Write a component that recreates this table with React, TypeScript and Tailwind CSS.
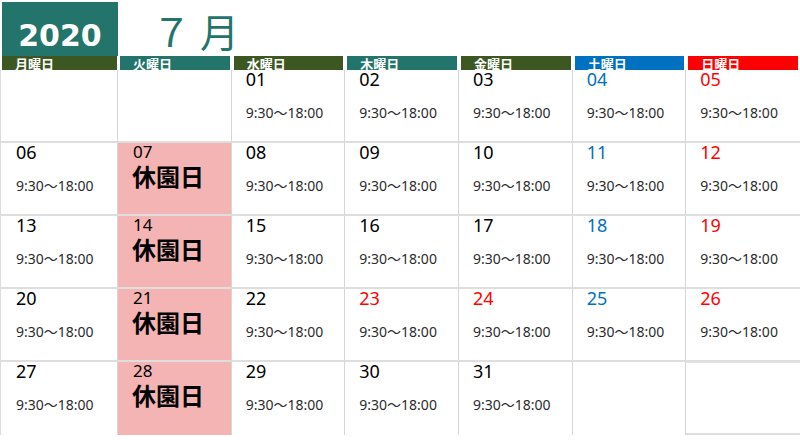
import React from "react";

type Cell = { d?: string; color?: string; closed?: boolean };

const BLUE = "text-[#0070c0]";
const RED = "text-[#ff0000]";

const rows: Cell[][] = [
  [{}, {}, { d: "01" }, { d: "02" }, { d: "03" }, { d: "04", color: BLUE }, { d: "05", color: RED }],
  [{ d: "06" }, { d: "07", closed: true }, { d: "08" }, { d: "09" }, { d: "10" }, { d: "11", color: BLUE }, { d: "12", color: RED }],
  [{ d: "13" }, { d: "14", closed: true }, { d: "15" }, { d: "16" }, { d: "17" }, { d: "18", color: BLUE }, { d: "19", color: RED }],
  [{ d: "20" }, { d: "21", closed: true }, { d: "22" }, { d: "23", color: RED }, { d: "24", color: RED }, { d: "25", color: BLUE }, { d: "26", color: RED }],
  [{ d: "27" }, { d: "28", closed: true }, { d: "29" }, { d: "30" }, { d: "31" }, {}, {}],
];

const headers = [
  { t: "月曜日", bg: "bg-[#3d5723]" },
  { t: "火曜日", bg: "bg-[#23746a]" },
  { t: "水曜日", bg: "bg-[#3d5723]" },
  { t: "木曜日", bg: "bg-[#23746a]" },
  { t: "金曜日", bg: "bg-[#3d5723]" },
  { t: "土曜日", bg: "bg-[#0070c0]" },
  { t: "日曜日", bg: "bg-[#ff0000]" },
];

const FONT = "font-['Noto_Sans','Noto_Sans_CJK_JP',sans-serif]";

export default function App() {
  return (
    <div className={`w-[800px] h-[440px] bg-white overflow-hidden ${FONT}`}>
      {/* title row */}
      <div className="grid grid-cols-[118px_repeat(6,minmax(0,1fr))] h-[56px]">
        <div className="pl-[2px] pt-[2px]">
          <div className="h-[54px] bg-[#23746a] flex items-end justify-center pb-[5px]">
            <span className="font-['DejaVu_Sans',sans-serif] font-bold text-[30px] leading-[30px] text-white">
              2020
            </span>
          </div>
        </div>
        <div className="col-span-6 flex items-end pl-[34px] pb-[3px] font-['Noto_Sans_CJK_JP',sans-serif] text-[39px] leading-[46px] text-[#23746a]">
          <span>７</span>
          <span className="ml-[9px]">月</span>
        </div>
      </div>
      {/* weekday headers */}
      <div className="grid grid-cols-[118px_repeat(6,minmax(0,1fr))] h-[14px]">
        {headers.map((h, i) => (
          <div key={i} className={i === 0 ? "pl-[2px] pr-[1px]" : "px-[2px]"}>
            <div className={`${h.bg} h-[14px] overflow-hidden pl-[13px]`}>
              <span className="font-['Noto_Sans_CJK_JP',sans-serif] font-bold text-[13px] leading-[15px] text-white block whitespace-nowrap">
                {h.t}
              </span>
            </div>
          </div>
        ))}
      </div>
      {/* calendar grid */}
      <div className="grid grid-cols-[118px_repeat(6,minmax(0,1fr))]">
        {rows.map((r, ri) =>
          r.map((c, ci) => {
            const last = ri === rows.length - 1;
            const bottom = !last || ci === 6 ? "border-b-2 border-b-[#dedede]" : "";
            const left = ci === 0 ? "border-l border-l-[#dcdcdc]" : "";
            const right = ci < 6 ? "border-r border-r-[#d6d6d6]" : "";
            const top = last && ci === 6 ? "border-t border-t-[#e4e4e4]" : "";
            const bg = c.closed ? "bg-[#f4b4b4]" : "bg-white";
            const pad = ci === 0 ? "pl-[15px]" : "pl-[14px]";
            return (
              <div
                key={`${ri}-${ci}`}
                className={`h-[73px] ${bg} ${bottom} ${left} ${right} ${top} ${pad}`}
              >
                {c.d && !c.closed && (
                  <>
                    <div className={`text-[18px] leading-[18px] ${c.color ?? "text-black"}`}>{c.d}</div>
                    <div className="mt-[18px] text-[14px] leading-[14px] text-[#2b2b2b] whitespace-nowrap">
                      9:30～18:00
                    </div>
                  </>
                )}
                {c.closed && (
                  <>
                    <div className="text-[17px] leading-[18px] text-black pl-[1px]">{c.d}</div>
                    <div className="mt-[3px] font-['Noto_Sans_CJK_JP',sans-serif] font-bold text-[24px] leading-[24px] text-black">
                      休園日
                    </div>
                  </>
                )}
              </div>
            );
          })
        )}
      </div>
    </div>
  );
}
